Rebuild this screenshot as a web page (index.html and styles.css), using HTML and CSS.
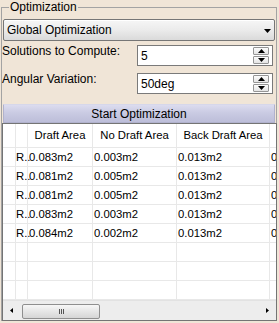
FILE: index.html
```html
<!DOCTYPE html>
<html>
<head>
<meta charset="utf-8">
<link rel="stylesheet" href="styles.css">
</head>
<body>
<fieldset class="group">
  <legend class="group-title">Optimization</legend>
  <div class="combo">
    <span class="combo-text">Global Optimization</span>
    <svg class="combo-arrow" width="7" height="4" viewBox="0 0 7 4"><path d="M0 0H7L3.5 4Z"/></svg>
  </div>
  <div class="field-row first">
    <span class="field-label">Solutions to Compute:</span>
    <div class="spinbox">
      <span class="spin-value">5</span>
      <div class="spin-buttons">
        <div class="spin-btn"><svg width="7" height="4" viewBox="0 0 7 4"><path d="M0 4H7L3.5 0Z"/></svg></div>
        <div class="spin-btn"><svg width="7" height="4" viewBox="0 0 7 4"><path d="M0 0H7L3.5 4Z"/></svg></div>
      </div>
    </div>
  </div>
  <div class="field-row second">
    <span class="field-label">Angular Variation:</span>
    <div class="spinbox">
      <span class="spin-value">50deg</span>
      <div class="spin-buttons">
        <div class="spin-btn"><svg width="7" height="4" viewBox="0 0 7 4"><path d="M0 4H7L3.5 0Z"/></svg></div>
        <div class="spin-btn"><svg width="7" height="4" viewBox="0 0 7 4"><path d="M0 0H7L3.5 4Z"/></svg></div>
      </div>
    </div>
  </div>
  <button class="action">Start Optimization</button>
  <div class="grid">
    <div class="row header">
      <div class="cell"></div><div class="cell"></div>
      <div class="cell">Draft Area</div><div class="cell">No Draft Area</div><div class="cell">Back Draft Area</div><div class="cell last"></div>
    </div>
    <div class="row">
      <div class="cell"></div><div class="cell name">R..</div>
      <div class="cell">0.083m2</div><div class="cell">0.003m2</div><div class="cell">0.013m2</div><div class="cell last">0.0</div>
    </div>
    <div class="row">
      <div class="cell"></div><div class="cell name">R..</div>
      <div class="cell">0.081m2</div><div class="cell">0.005m2</div><div class="cell">0.013m2</div><div class="cell last">0.0</div>
    </div>
    <div class="row">
      <div class="cell"></div><div class="cell name">R..</div>
      <div class="cell">0.081m2</div><div class="cell">0.005m2</div><div class="cell">0.013m2</div><div class="cell last">0.0</div>
    </div>
    <div class="row">
      <div class="cell"></div><div class="cell name">R..</div>
      <div class="cell">0.083m2</div><div class="cell">0.003m2</div><div class="cell">0.013m2</div><div class="cell last">0.0</div>
    </div>
    <div class="row">
      <div class="cell"></div><div class="cell name">R..</div>
      <div class="cell">0.084m2</div><div class="cell">0.002m2</div><div class="cell">0.013m2</div><div class="cell last">0.0</div>
    </div>
    <div class="row">
      <div class="cell"></div><div class="cell"></div><div class="cell"></div><div class="cell"></div><div class="cell"></div><div class="cell last"></div>
    </div>
    <div class="row">
      <div class="cell"></div><div class="cell"></div><div class="cell"></div><div class="cell"></div><div class="cell"></div><div class="cell last"></div>
    </div>
    <div class="row">
      <div class="cell"></div><div class="cell"></div><div class="cell"></div><div class="cell"></div><div class="cell"></div><div class="cell last"></div>
    </div>
    <div class="hscroll">
      <div class="sb-arrow"><svg width="3" height="5" viewBox="0 0 3 5"><path d="M3 0V5L0 2.5Z"/></svg></div>
      <div class="sb-track">
        <div class="sb-thumb"><span class="grip"></span><span class="grip"></span><span class="grip"></span></div>
      </div>
      <div class="sb-arrow"><svg width="3" height="5" viewBox="0 0 3 5"><path d="M0 0V5L3 2.5Z"/></svg></div>
    </div>
  </div>
</fieldset>
</body>
</html>
```
FILE: styles.css
```css
html, body {
  margin: 0;
  padding: 0;
}
body {
  width: 279px;
  height: 323px;
  overflow: hidden;
  background: #f0e5d7;
  font-family: "Liberation Sans", Arial, sans-serif;
  font-size: 12px;
  color: #000;
}
.group {
  margin: 0 2px 0 1px;
  padding: 0;
  border: 1px solid #a3a3a3;
  border-bottom: none;
  min-width: 0;
}
.group-title {
  margin-left: 7px;
  padding: 0 1px;
  line-height: 14px;
  font-size: 12px;
}
.combo {
  margin: 5px 1px 0;
  height: 22px;
  box-sizing: border-box;
  border: 1px solid #767676;
  border-radius: 2px;
  background: linear-gradient(#f6f6f6, #ebebeb 50%, #dadada);
  box-shadow: inset 0 1px 0 #fff;
  display: flex;
  align-items: center;
  justify-content: space-between;
  padding: 0 3px;
}
.combo-arrow {
  display: block;
  margin-top: 1px;
}
.field-row {
  display: flex;
  justify-content: space-between;
  align-items: flex-start;
  margin-right: 3px;
}
.field-row.first {
  margin-top: 4px;
}
.field-row.second {
  margin-top: 7px;
}
.field-label {
  line-height: 12px;
}
.spinbox {
  width: 136px;
  height: 21px;
  box-sizing: border-box;
  border: 1px solid #7a7a7a;
  background: #fff;
  display: flex;
  align-items: center;
  justify-content: space-between;
  padding: 0 3px;
}
.spin-value {
  line-height: 14px;
  margin-top: 1px;
}
.spin-buttons {
  display: flex;
  flex-direction: column;
  gap: 1px;
}
.spin-btn {
  width: 16px;
  height: 8px;
  box-sizing: border-box;
  border: 1px solid #959595;
  border-radius: 1px;
  background: linear-gradient(#fcfcfc, #e4e4e4);
  display: flex;
  align-items: center;
  justify-content: center;
}
.spin-btn svg {
  display: block;
}
.action {
  display: block;
  width: calc(100% - 2px);
  height: 19px;
  margin: 10px 1px 0;
  padding: 0;
  border: 1px solid #b1b2cd;
  border-top-color: #d6d7ea;
  border-radius: 1px;
  background: linear-gradient(#dcdcef, #cacbe3 45%, #bdbed9);
  font-family: "Liberation Sans", Arial, sans-serif;
  font-size: 12px;
  color: #000;
}
.grid {
  margin: 0 -1px 0 0;
  height: 198px;
  box-sizing: border-box;
  border: 1px solid #747474;
  background: #fff;
  overflow: hidden;
  display: flex;
  flex-direction: column;
  font-size: 11.3px;
}
.row {
  display: grid;
  grid-template-columns: 13px 12px 65px 84px 93px 1fr;
  flex: none;
}
.cell {
  box-sizing: border-box;
  border-right: 1px solid #e8e8e8;
  border-bottom: 1px solid #e8e8e8;
  white-space: nowrap;
  overflow: hidden;
  padding-left: 1px;
  line-height: 18px;
  height: 19px;
}
.cell.last {
  border-right: none;
}
.cell.name {
  overflow: visible;
  padding-left: 0;
}
.header .cell {
  height: 24px;
  line-height: 23px;
  text-align: center;
  padding-left: 0;
}
.hscroll {
  flex: none;
  height: 20px;
  display: flex;
  background: #ededed;
  border-top: 1px solid #e2e2e2;
  box-sizing: border-box;
}
.sb-arrow {
  width: 17px;
  display: flex;
  align-items: center;
  justify-content: center;
}
.sb-arrow svg {
  display: block;
}
.sb-track {
  flex: 1;
  padding: 3px 0 0 2px;
}
.sb-thumb {
  width: 78px;
  height: 15px;
  box-sizing: border-box;
  border: 1px solid #8f8f8f;
  border-radius: 2px;
  background: linear-gradient(#f7f7f7, #e6e6e6 50%, #d6d6d6);
  display: flex;
  align-items: center;
  justify-content: center;
  gap: 1px;
}
.grip {
  width: 1px;
  height: 5px;
  background: #555;
}
```
